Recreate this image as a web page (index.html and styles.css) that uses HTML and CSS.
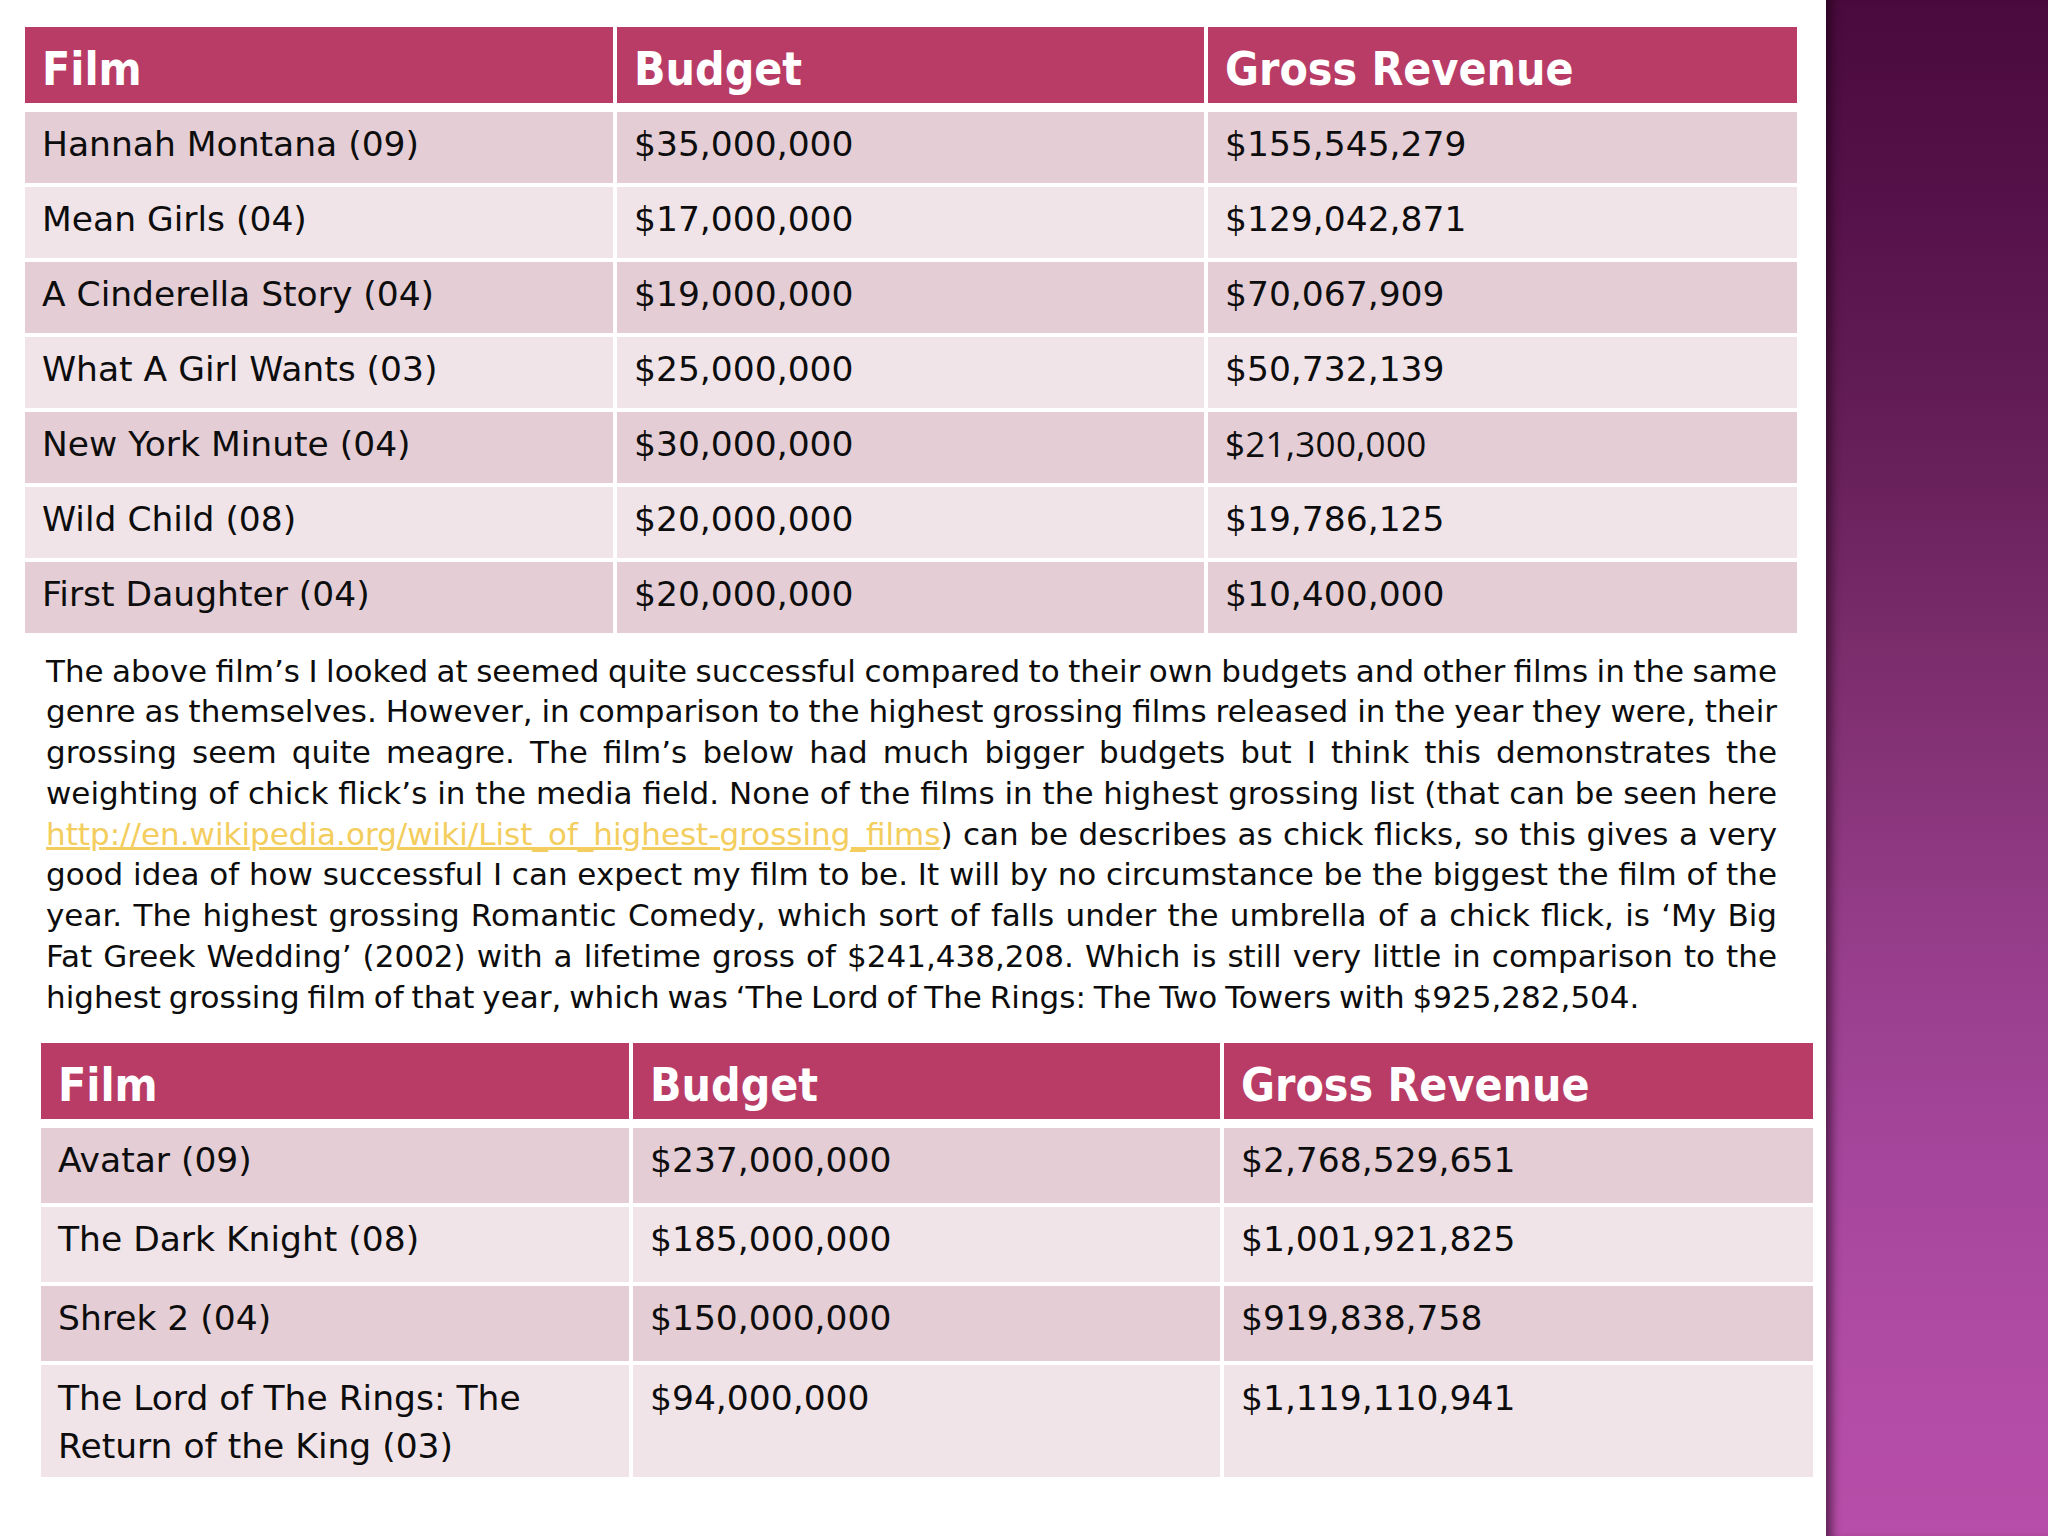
FILE: index.html
```html
<!DOCTYPE html>
<html lang="en">
<head>
<meta charset="utf-8">
<title>Chick flick box office comparison</title>
<link rel="stylesheet" href="styles.css">
</head>
<body>
<main class="slide">
  <table class="films films-first">
    <colgroup><col class="c1"><col class="c2"><col class="c3"></colgroup>
    <thead>
      <tr><th>Film</th><th>Budget</th><th>Gross Revenue</th></tr>
    </thead>
    <tbody>
      <tr><td>Hannah Montana (09)</td><td>$35,000,000</td><td>$155,545,279</td></tr>
      <tr><td>Mean Girls (04)</td><td>$17,000,000</td><td>$129,042,871</td></tr>
      <tr><td>A Cinderella Story (04)</td><td>$19,000,000</td><td>$70,067,909</td></tr>
      <tr><td>What A Girl Wants (03)</td><td>$25,000,000</td><td>$50,732,139</td></tr>
      <tr><td>New York Minute (04)</td><td>$30,000,000</td><td><span class="alt-font">$21,300,000</span></td></tr>
      <tr><td>Wild Child (08)</td><td>$20,000,000</td><td>$19,786,125</td></tr>
      <tr><td>First Daughter (04)</td><td>$20,000,000</td><td>$10,400,000</td></tr>
    </tbody>
  </table>

  <p class="summary">
    <span class="line">The above film’s I looked at seemed quite successful compared to their own budgets and other films in the same</span>
    <span class="line">genre as themselves. However, in comparison to the highest grossing films released in the year they were, their</span>
    <span class="line">grossing seem quite meagre. The film’s below had much bigger budgets but I think this demonstrates the</span>
    <span class="line">weighting of chick flick’s in the media field. None of the films in the highest grossing list (that can be seen here</span>
    <span class="line"><a class="link" href="#">http://en.wikipedia.org/wiki/List_of_highest-grossing_films</a>) can be describes as chick flicks, so this gives a very</span>
    <span class="line">good idea of how successful I can expect my film to be. It will by no circumstance be the biggest the film of the</span>
    <span class="line">year. The highest grossing Romantic Comedy, which sort of falls under the umbrella of a chick flick, is ‘My Big</span>
    <span class="line">Fat Greek Wedding’ (2002) with a lifetime gross of $241,438,208. Which is still very little in comparison to the</span>
    <span class="line line-last">highest grossing film of that year, which was ‘The Lord of The Rings: The Two Towers with $925,282,504.</span>
  </p>

  <table class="films films-second">
    <colgroup><col class="c1"><col class="c2"><col class="c3"></colgroup>
    <thead>
      <tr><th>Film</th><th>Budget</th><th>Gross Revenue</th></tr>
    </thead>
    <tbody>
      <tr><td>Avatar (09)</td><td>$237,000,000</td><td>$2,768,529,651</td></tr>
      <tr><td>The Dark Knight (08)</td><td>$185,000,000</td><td>$1,001,921,825</td></tr>
      <tr><td>Shrek 2 (04)</td><td>$150,000,000</td><td>$919,838,758</td></tr>
      <tr><td>The Lord of The Rings: The Return of the King (03)</td><td>$94,000,000</td><td>$1,119,110,941</td></tr>
    </tbody>
  </table>
</main>
<aside class="side-panel" aria-hidden="true"></aside>
</body>
</html>
```

FILE: styles.css
```css
html, body {
  margin: 0;
  padding: 0;
}

body {
  width: 2048px;
  height: 1536px;
  overflow: hidden;
  display: flex;
  background: #ffffff;
  color: #111111;
  font-family: "DejaVu Sans", Verdana, sans-serif;
}

.slide {
  flex: 0 0 1826px;
  display: flex;
  flex-direction: column;
  align-items: flex-start;
}

/* ---------- tables ---------- */

.films {
  width: 1772px;
  table-layout: fixed;
  border-collapse: separate;
  border-spacing: 0;
}

.films-first {
  margin: 27px 0 0 25px;
}

.films-second {
  margin: 25px 0 0 41px;
}

.films col.c1 { width: 588px; }
.films col.c2 { width: 591px; }
.films col.c3 { width: 593px; }

.films th,
.films td {
  box-sizing: border-box;
  text-align: left;
  vertical-align: top;
  padding-left: 17px;
  padding-right: 12px;
}

.films th + th,
.films td + td {
  border-left: 4px solid #ffffff;
}

.films th {
  height: 76px;
  background: #b83c65;
  color: #ffffff;
  font-family: "DejaVu Sans Condensed", "DejaVu Sans", sans-serif;
  font-stretch: condensed;
  font-weight: bold;
  font-size: 46px;
  line-height: 56px;
  padding-top: 14px;
  padding-bottom: 6px;
}

.films td {
  font-size: 34.5px;
  line-height: 48px;
  padding-top: 8px;
  padding-bottom: 0;
  border-top: 4px solid #ffffff;
  color: #0d0d0d;
}

.films tbody tr:first-child td {
  border-top-width: 9px;
}

.films tbody tr:nth-child(odd) td {
  background: #e4cdd5;
}

.films tbody tr:nth-child(even) td {
  background: #f1e4e9;
}

.films-first tbody tr { height: 75px; }
.films-first tbody tr:first-child { height: 80px; }

.films-second tbody tr { height: 79px; }
.films-second tbody tr:first-child { height: 84px; }
.films-second tbody tr:last-child { height: 116px; }

.films-second tbody tr:last-child td {
  padding-top: 9px;
}

.alt-font {
  font-family: "Open Sans", sans-serif;
  font-size: 35px;
  letter-spacing: 0.3px;
}

/* ---------- paragraph ---------- */

.summary {
  margin: 17.5px 0 0 46px;
  width: 1731px;
  font-size: 31px;
  line-height: 40.8px;
  word-spacing: -2px;
  color: #0d0d0d;
}

.line {
  display: block;
  text-align: justify;
  text-align-last: justify;
}

.line-last {
  text-align-last: left;
}

.link {
  color: #f3cd5d;
  text-decoration: underline;
  text-decoration-color: #f3cd5d;
}

/* ---------- decorative side panel ---------- */

.side-panel {
  flex: 1 1 auto;
  background: linear-gradient(180deg,
    #4a0a3d 0%,
    #56124a 14%,
    #672059 30%,
    #7f2f70 45%,
    #943c88 60%,
    #a5459b 75%,
    #b04ba4 88%,
    #b74ea9 100%);
  box-shadow: inset 12px 0 10px -6px rgba(25, 0, 20, 0.55);
}
```
